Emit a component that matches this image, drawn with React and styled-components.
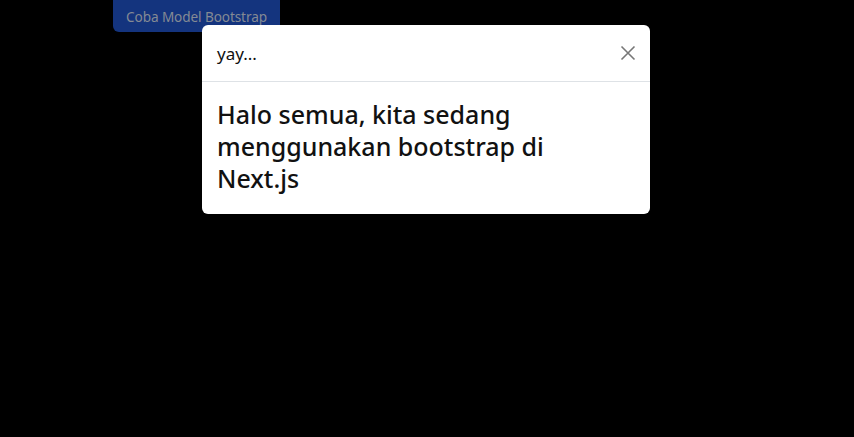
import React from "react";
import styled, { createGlobalStyle } from "styled-components";

const Global = createGlobalStyle`
  html, body { margin: 0; padding: 0; background: #000; }
  body { font-family: "Noto Sans", "Open Sans", sans-serif; overflow: hidden; }
  #root { width: 854px; height: 437px; }
`;

const Page = styled.div`
  position: relative;
  width: 854px;
  height: 437px;
  background: #000;
  overflow: hidden;
`;

const Toolbar = styled.div`
  display: flex;
  padding-left: 113px;
`;

const DimButton = styled.button`
  margin-top: -6px;
  height: 38px;
  width: 167px;
  padding: 6px 0 0;
  border: none;
  border-radius: 6px;
  background: #14347e;
  color: #848a94;
  font-family: inherit;
  font-size: 13.6px;
  letter-spacing: -0.1px;
  cursor: pointer;
`;

const Dialog = styled.div`
  position: absolute;
  left: 202px;
  top: 25px;
  width: 448px;
  background: #fff;
  border-radius: 6px;
  display: flex;
  flex-direction: column;
  color: #111;
`;

const Header = styled.div`
  display: flex;
  align-items: center;
  justify-content: space-between;
  height: 56px;
  padding: 0 9px 0 15px;
  border-bottom: 1px solid #dee2e6;
`;

const Title = styled.h5`
  margin: 0;
  font-size: 17px;
  font-weight: 400;
  line-height: 24px;
  padding-top: 2px;
`;

const Close = styled.button`
  width: 26px;
  height: 26px;
  display: flex;
  align-items: center;
  justify-content: center;
  border: none;
  background: transparent;
  padding: 0;
  cursor: pointer;
`;

const Body = styled.div`
  padding: 16px 15px 20px;
`;

const Heading = styled.h3`
  margin: 0;
  font-size: 25px;
  font-weight: 500;
  line-height: 32px;
  max-width: 350px;
`;

export default function App() {
  return (
    <Page>
      <Global />
      <Toolbar>
        <DimButton>Coba Model Bootstrap</DimButton>
      </Toolbar>
      <Dialog>
        <Header>
          <Title>yay...</Title>
          <Close aria-label="Close">
            <svg width="16" height="16" viewBox="0 0 16 16">
              <path d="M1.5 1.5 L14.5 14.5 M14.5 1.5 L1.5 14.5" stroke="#777" strokeWidth="1.6" fill="none" />
            </svg>
          </Close>
        </Header>
        <Body>
          <Heading>Halo semua, kita sedang menggunakan bootstrap di Next.js</Heading>
        </Body>
      </Dialog>
    </Page>
  );
}
